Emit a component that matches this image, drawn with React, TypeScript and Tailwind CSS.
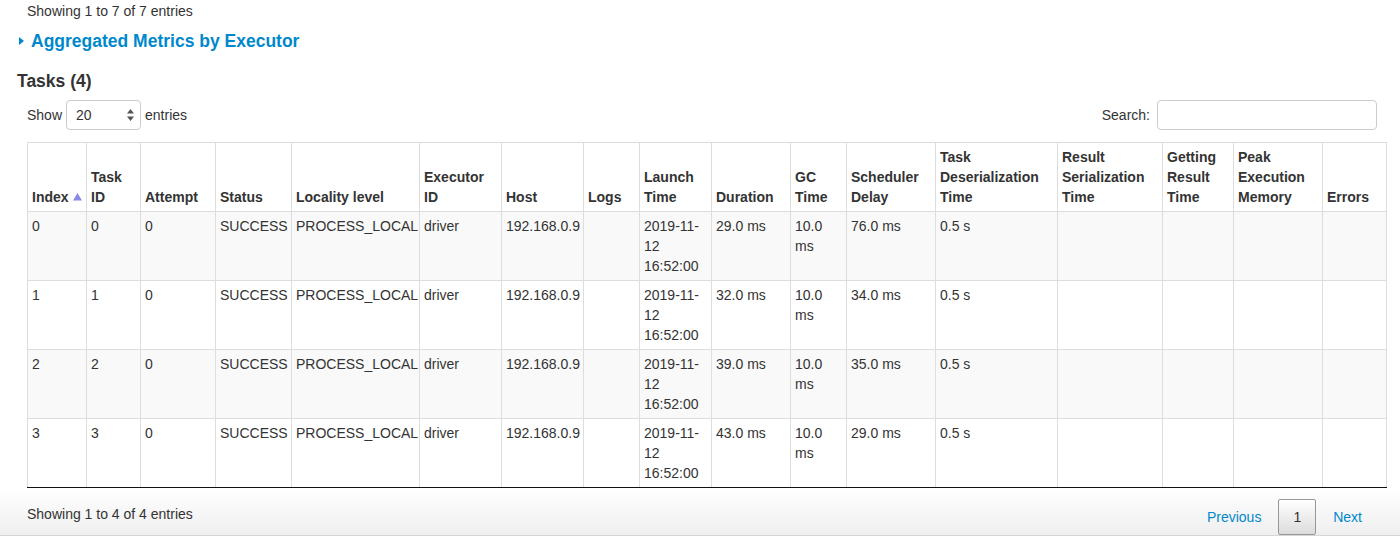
import React from "react";

const widths = [59, 54, 75, 76, 128, 82, 82, 56, 72, 79, 56, 89, 122, 105, 71, 89, 64];
const headers = [
  "Index",
  "Task ID",
  "Attempt",
  "Status",
  "Locality level",
  "Executor ID",
  "Host",
  "Logs",
  "Launch Time",
  "Duration",
  "GC Time",
  "Scheduler Delay",
  "Task Deserialization Time",
  "Result Serialization Time",
  "Getting Result Time",
  "Peak Execution Memory",
  "Errors",
];

const rows = [
  { i: "0", dur: "29.0 ms", sd: "76.0 ms" },
  { i: "1", dur: "32.0 ms", sd: "34.0 ms" },
  { i: "2", dur: "39.0 ms", sd: "35.0 ms" },
  { i: "3", dur: "43.0 ms", sd: "29.0 ms" },
];

export default function App() {
  return (
    <div
      className="w-[1400px] h-[538px] bg-white text-[14px] leading-5 text-[#333] overflow-hidden relative"
      style={{ fontFamily: '"Liberation Sans", Arial, sans-serif' }}
    >
      <div className="pl-[27px] pt-[1px] h-5">Showing 1 to 7 of 7 entries</div>
      <div className="mt-[11px] flex items-center h-5 pl-[19px]">
        <svg width="5" height="8" viewBox="0 0 5 8" className="mr-[7px]">
          <polygon points="0,0 5,4 0,8" fill="#0088cc" />
        </svg>
        <span className="text-[17.5px] font-bold text-[#0088cc]">Aggregated Metrics by Executor</span>
      </div>
      <div className="mt-[20px] pl-[17px] h-5 text-[17.5px] font-bold">Tasks (4)</div>
      <div className="mt-[9px] flex items-center justify-between h-[30px] pl-[27px] pr-[23px]">
        <div className="flex items-center">
          <span>Show</span>
          <div className="ml-[4px] w-[75px] h-[30px] rounded-[4px] border border-[#ccc] flex items-center justify-between pl-[9px] pr-[6px] bg-white">
            <span>20</span>
            <svg width="7" height="12" viewBox="0 0 7 12">
              <polygon points="3.5,0 7,4.5 0,4.5" fill="#555" />
              <polygon points="0,7.5 7,7.5 3.5,12" fill="#555" />
            </svg>
          </div>
          <span className="ml-[4px]">entries</span>
        </div>
        <div className="flex items-center">
          <span>Search:</span>
          <div className="ml-[7px] w-[220px] h-[30px] rounded-[4px] border border-[#ccc] bg-white" />
        </div>
      </div>
      <div className="mt-[12px] pl-[27px]">
        <table className="table-fixed border-collapse w-[1359px] border-b border-b-[#111]">
          <colgroup>
            {widths.map((w, k) => (
              <col key={k} style={{ width: w }} />
            ))}
          </colgroup>
          <thead>
            <tr className="h-[69px]">
              {headers.map((h, k) => (
                <th
                  key={k}
                  className="border border-[#ddd] p-1 text-left align-bottom font-bold"
                >
                  {k === 0 ? (
                    <span className="inline-flex items-center">
                      {h}
                      <svg width="9" height="8" viewBox="0 0 9 8" className="ml-[4px]">
                        <polygon points="4.5,0 9,7.5 0,7.5" fill="#8a8ae6" />
                      </svg>
                    </span>
                  ) : (
                    h
                  )}
                </th>
              ))}
            </tr>
          </thead>
          <tbody>
            {rows.map((r, idx) => {
              const cells: React.ReactNode[] = [
                r.i,
                r.i,
                "0",
                "SUCCESS",
                "PROCESS_LOCAL",
                "driver",
                "192.168.0.9",
                "",
                <>
                  2019-11-<wbr />12 16:52:00
                </>,
                r.dur,
                "10.0 ms",
                r.sd,
                "0.5 s",
                "",
                "",
                "",
                "",
              ];
              return (
                <tr
                  key={idx}
                  className={`h-[69px] ${idx % 2 === 0 ? "bg-[#f9f9f9]" : "bg-white"}`}
                >
                  {cells.map((c, k) => (
                    <td
                      key={k}
                      className={`border border-[#ddd] p-1 text-left align-top ${
                        idx === 3 ? "border-b-[#111]" : ""
                      }`}
                    >
                      {c}
                    </td>
                  ))}
                </tr>
              );
            })}
          </tbody>
        </table>
      </div>
      <div className="h-[48px] bg-gradient-to-b from-white to-[#efefef] border-b border-[#d6d6d6] flex items-start justify-between pl-[27px] pr-[23px]">
        <div className="mt-[16px]">Showing 1 to 4 of 4 entries</div>
        <div className="mt-[11px] flex items-center">
          <span className="px-[14px] py-[7px] border border-transparent text-[#0088cc]">Previous</span>
          <span className="ml-[2px] px-[14px] py-[7px] border border-[#979797] rounded-[2px] bg-gradient-to-b from-white to-[#dcdcdc] text-[#333]">
            1
          </span>
          <span className="ml-[2px] px-[14px] py-[7px] border border-transparent text-[#0088cc]">Next</span>
        </div>
      </div>
    </div>
  );
}
